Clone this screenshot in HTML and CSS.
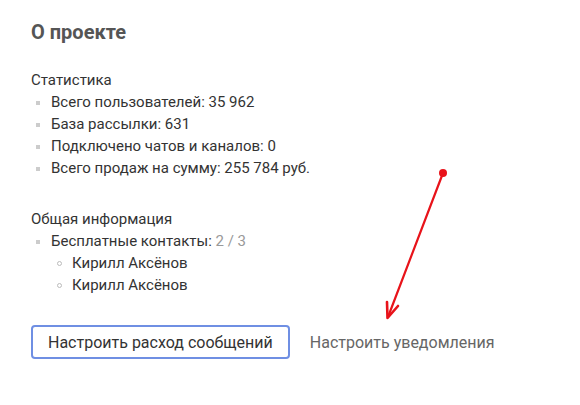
FILE: index.html
```html
<!DOCTYPE html>
<html lang="ru">
<head>
  <meta charset="UTF-8">
  <meta name="viewport" content="width=device-width, initial-scale=1.0">
  <title>О проекте</title>
  <link rel="stylesheet" href="styles.css">
</head>
<body>
  <div class="project">
    <h2 class="project-title">О проекте</h2>

    <div class="section">
      <div class="section-title">Статистика</div>
      <ul class="stats">
        <li>Всего пользователей: 35 962</li>
        <li>База рассылки: 631</li>
        <li>Подключено чатов и каналов: 0</li>
        <li>Всего продаж на сумму: 255 784 руб.</li>
      </ul>
    </div>

    <div class="section">
      <div class="section-title">Общая информация</div>
      <ul class="stats">
        <li>Бесплатные контакты: <span class="muted">2 / 3</span>
          <ul class="contacts">
            <li>Кирилл Аксёнов</li>
            <li>Кирилл Аксёнов</li>
          </ul>
        </li>
      </ul>
    </div>

    <div class="actions">
      <button class="btn btn-outline" type="button">Настроить расход сообщений</button>
      <button class="btn btn-link" type="button">Настроить уведомления</button>
    </div>
  </div>

  <svg class="annotation" width="580" height="405" viewBox="0 0 580 405">
    <circle cx="443" cy="173" r="4" fill="#e8131a"/>
    <line x1="443" y1="173" x2="388" y2="317" stroke="#e8131a" stroke-width="2.2" stroke-linecap="round"/>
    <polyline points="387,302 387.5,318 398,306" fill="none" stroke="#e8131a" stroke-width="2.6" stroke-linecap="round" stroke-linejoin="round"/>
  </svg>
</body>
</html>
```

FILE: styles.css
```css
body {
  margin: 0;
  font-family: Roboto, "Noto Sans", Arial, sans-serif;
  font-size: 15px;
  color: #333;
  background: #fff;
}

.project {
  padding: 20px 31px 0;
}

.project-title {
  margin: 0 0 25px;
  font-size: 20px;
  line-height: 24px;
  font-weight: bold;
  color: #555;
}

.section {
  margin-bottom: 29px;
}

.section-title {
  line-height: 22px;
}

.stats {
  margin: 0;
  padding: 0;
  list-style: none;
}

.stats > li {
  position: relative;
  padding-left: 20px;
  line-height: 22px;
}

.stats > li::before {
  content: "";
  position: absolute;
  left: 5px;
  top: 10px;
  width: 4px;
  height: 4px;
  background: #ccc;
}

.contacts {
  margin: 0;
  padding: 0;
  list-style: none;
}

.contacts li {
  position: relative;
  padding-left: 21px;
  line-height: 22px;
}

.contacts li::before {
  content: "";
  position: absolute;
  left: 6px;
  top: 9px;
  width: 3px;
  height: 3px;
  border: 1px solid #bbb;
  border-radius: 50%;
}

.muted {
  color: #999;
}

.actions {
  display: flex;
  align-items: center;
  gap: 20px;
  margin-top: 1px;
}

.btn {
  font-family: inherit;
  font-size: 16px;
  background: none;
  cursor: pointer;
}

.btn-outline {
  height: 34px;
  padding: 0 15px;
  border: 2px solid #6f8fe3;
  border-radius: 4px;
  color: #333;
}

.btn-link {
  border: none;
  padding: 0;
  color: #666;
}

.annotation {
  position: absolute;
  left: 0;
  top: 0;
  pointer-events: none;
}
```
